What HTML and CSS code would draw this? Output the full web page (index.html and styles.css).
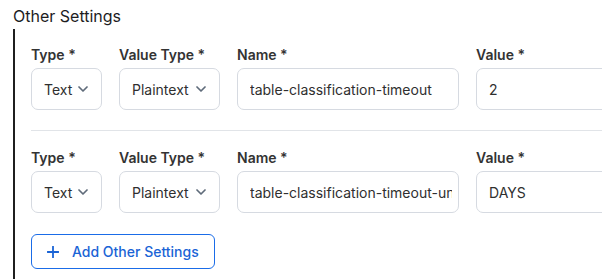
FILE: index.html
```html
<!DOCTYPE html>
<html lang="en">
<head>
    <meta charset="UTF-8">
    <meta name="viewport" content="width=device-width, initial-scale=1.0">
    <title>Other Settings</title>
    <link rel="stylesheet" href="styles.css">
</head>
<body>
    <div class="settings">
        <h2 class="settings-title">Other Settings</h2>
        <div class="settings-list">
            <div class="setting-row">
                <div class="field">
                    <label>Type *</label>
                    <div class="select select-type">
                        <span>Text</span>
                        <svg class="chevron" viewBox="0 0 10 6"><polyline points="1,1 5,5 9,1"/></svg>
                    </div>
                </div>
                <div class="field">
                    <label>Value Type *</label>
                    <div class="select">
                        <span>Plaintext</span>
                        <svg class="chevron" viewBox="0 0 10 6"><polyline points="1,1 5,5 9,1"/></svg>
                    </div>
                </div>
                <div class="field">
                    <label>Name *</label>
                    <input class="input" type="text" value="table-classification-timeout">
                </div>
                <div class="field">
                    <label>Value *</label>
                    <input class="input" type="text" value="2">
                </div>
            </div>
            <div class="setting-row">
                <div class="field">
                    <label>Type *</label>
                    <div class="select select-type">
                        <span>Text</span>
                        <svg class="chevron" viewBox="0 0 10 6"><polyline points="1,1 5,5 9,1"/></svg>
                    </div>
                </div>
                <div class="field">
                    <label>Value Type *</label>
                    <div class="select">
                        <span>Plaintext</span>
                        <svg class="chevron" viewBox="0 0 10 6"><polyline points="1,1 5,5 9,1"/></svg>
                    </div>
                </div>
                <div class="field">
                    <label>Name *</label>
                    <input class="input" type="text" value="table-classification-timeout-unit">
                </div>
                <div class="field">
                    <label>Value *</label>
                    <input class="input" type="text" value="DAYS">
                </div>
            </div>
            <button class="add-button">
                <svg class="plus" viewBox="0 0 12 12"><path d="M6 0.5v11M0.5 6h11"/></svg>
                Add Other Settings
            </button>
        </div>
    </div>
</body>
</html>
```

FILE: styles.css
```css
* {
    margin: 0;
    padding: 0;
    box-sizing: border-box;
    font-family: Inter, "Noto Sans", sans-serif;
}

body {
    background: #ffffff;
    overflow: hidden;
}

.settings {
    padding: 4px 0 0 13px;
    width: 100%;
    overflow: hidden;
}

.settings-title {
    font-size: 16px;
    font-weight: 400;
    line-height: 24px;
    color: #1d1d1f;
}

.settings-list {
    border-left: 2px solid #1f1f1f;
    margin-top: 1px;
    padding-left: 16px;
    padding-bottom: 12px;
}

.setting-row {
    display: grid;
    grid-template-columns: 71px 101px 222px 222px;
    column-gap: 17px;
    padding: 16px 0 20px;
    border-bottom: 1px solid #e1e4e8;
}

.setting-row + .setting-row {
    padding-top: 17px;
    padding-bottom: 21px;
    border-bottom: none;
}

.field label {
    display: block;
    font-size: 14px;
    font-weight: 600;
    line-height: 20px;
    color: #333333;
    margin-bottom: 3px;
}

.select,
.input {
    height: 42px;
    border: 1px solid #d6dae1;
    border-radius: 7px;
    font-size: 14px;
    color: #2f2f2f;
    background: #ffffff;
}

.select {
    display: flex;
    align-items: center;
    justify-content: space-between;
    padding: 0 13px 0 12px;
}

.input {
    width: 100%;
    padding: 0 6px 0 12px;
    outline: none;
}

.chevron {
    width: 10px;
    height: 6px;
    fill: none;
    stroke: #5f6b7a;
    stroke-width: 1.7;
    stroke-linecap: round;
    stroke-linejoin: round;
}

.add-button {
    display: flex;
    align-items: center;
    gap: 13px;
    height: 35px;
    padding: 0 15px;
    border: 1px solid #1a6ce8;
    border-radius: 6px;
    background: #ffffff;
    color: #1a64d6;
    font-size: 14px;
    font-weight: 500;
    cursor: pointer;
}

.plus {
    width: 12px;
    height: 12px;
    fill: none;
    stroke: #1a64d6;
    stroke-width: 1.8;
    stroke-linecap: round;
}
```
